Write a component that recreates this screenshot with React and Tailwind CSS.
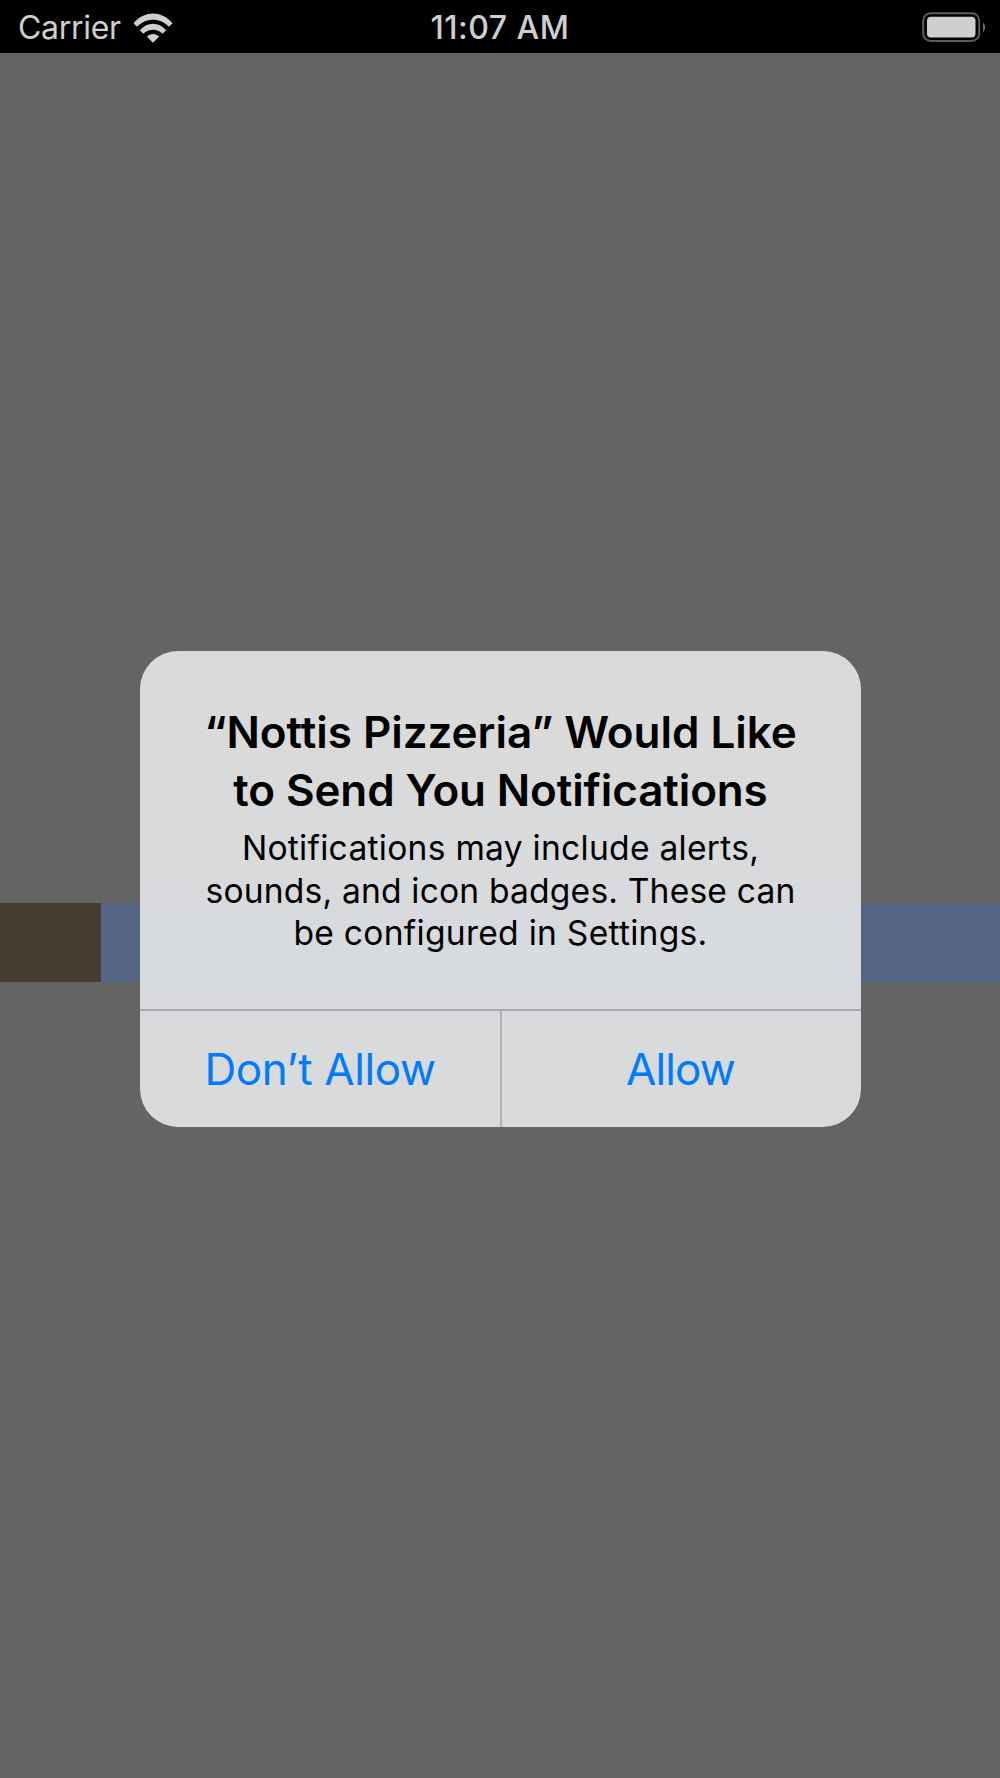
const titleLines = [
  { text: "“Nottis Pizzeria” Would Like", className: "tracking-[-0.04px]" },
  { text: "to Send You Notifications", className: "tracking-[-0.12px]" },
];

const messageLines = [
  { text: "Notifications may include alerts,", className: "tracking-[0.27px]" },
  { text: "sounds, and icon badges. These can", className: "tracking-[0.18px]" },
  { text: "be configured in Settings.", className: "tracking-[0.27px]" },
];

const WifiIcon = () => (
  <svg width="40" height="30" viewBox="0 0 40 30" fill="#cfcfcf">
    <path d="M0.5 10.2C11.2-2.9 28.8-2.9 39.5 10.2L36 13.8C27 4.4 13 4.4 4 13.8Z" />
    <path d="M6.8 17.2C14.5 8.6 25.5 8.6 33.2 17.2L29.7 20.8C24 15.4 16 15.4 10.3 20.8Z" />
    <path d="M13.8 23.6C17.4 20.1 22.6 20.1 26.2 23.6L20 29.8Z" />
  </svg>
);

const BatteryIcon = () => (
  <svg width="64" height="32" viewBox="0 0 64 32" fill="none">
    <rect x="1.2" y="1.2" width="56" height="27.8" rx="7.5" stroke="#5b5b5b" strokeWidth="2" />
    <rect x="5" y="4.8" width="48.5" height="20.7" rx="4" fill="#cfcfcf" />
    <path d="M61 10.5C63.8 12 63.8 18.5 61 20Z" fill="#6b6b6b" />
  </svg>
);

const StatusBar = () => (
  <header className="grid h-[53px] grid-cols-3 items-center bg-black text-[32px] leading-[54px] text-[#cfcfcf]">
    <div className="flex items-center pl-[18px]">
      <span className="tracking-[-0.3px]">Carrier</span>
      <span className="ml-[12.5px]">
        <WifiIcon />
      </span>
    </div>
    <span className="pt-px text-center font-medium tracking-[0.5px]">11:07 AM</span>
    <div className="flex justify-end pr-[14px]">
      <BatteryIcon />
    </div>
  </header>
);

const PermissionAlert = () => (
  <div
    role="alertdialog"
    className="absolute top-[651px] left-[140px] flex h-[476px] w-[721px] flex-col overflow-hidden rounded-[38px] bg-linear-to-b from-[#dadada] from-20% via-[#d7dade] via-65% to-[#dadada]"
  >
    <div className="h-[358px] pt-[52px] text-center whitespace-nowrap text-black">
      <h1 className="text-[44px] leading-[58px] font-semibold">
        {titleLines.map((line) => (
          <span key={line.text} className="block">
            <span className={line.className}>{line.text}</span>
          </span>
        ))}
      </h1>
      <p className="mt-[8px] text-[33.6px] leading-[42.5px]">
        {messageLines.map((line) => (
          <span key={line.text} className="block">
            <span className={line.className}>{line.text}</span>
          </span>
        ))}
      </p>
    </div>
    <div className="grid flex-1 grid-cols-[362px_1fr] border-t-2 border-[#a6aaac] text-[44px] text-[#007aff]">
      <button type="button" className="border-r-2 border-[#b0b2b5]">
        <span className="tracking-[-0.4px]">Don’t Allow</span>
      </button>
      <button type="button" className="pr-[2px]">
        <span className="tracking-[-0.9px]">Allow</span>
      </button>
    </div>
  </div>
);

export default function App() {
  return (
    <div className="relative flex h-[1778px] w-[1000px] flex-col overflow-hidden bg-[#646464] font-['Inter',sans-serif]">
      <StatusBar />
      <main className="pt-[850px]">
        <div className="flex h-[79px]">
          <div className="w-[101px] bg-[#453d30]" />
          <div className="flex-1 bg-[#546583]" />
        </div>
      </main>
      <PermissionAlert />
    </div>
  );
}
